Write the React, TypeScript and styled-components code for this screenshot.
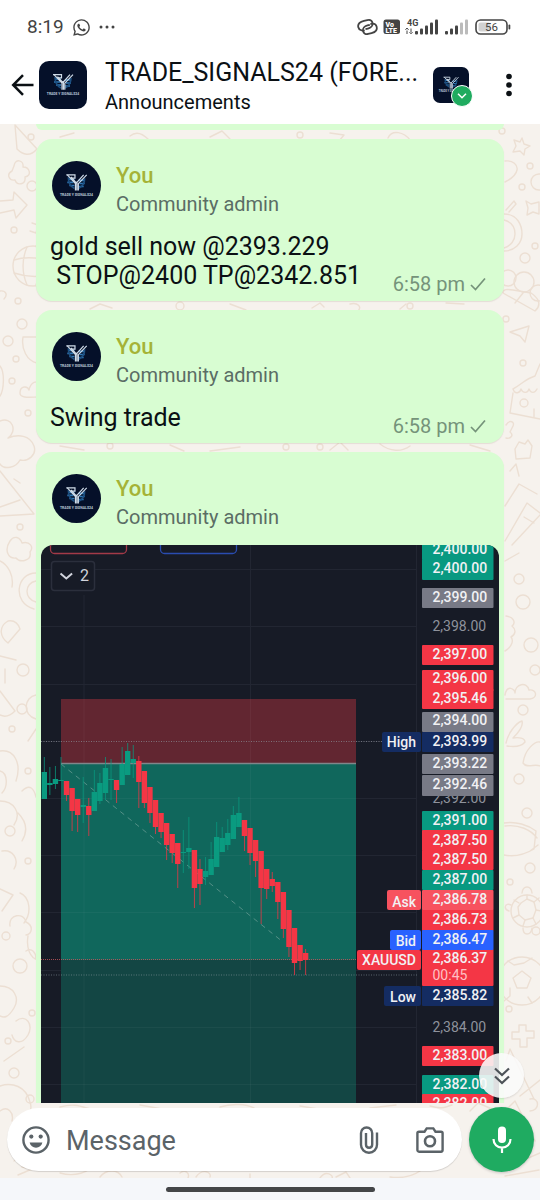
import React from "react";
import styled, { createGlobalStyle, css } from "styled-components";
import { FaWhatsapp } from "react-icons/fa";

const GlobalStyle = createGlobalStyle`
  * { box-sizing: border-box; }
  html, body { margin: 0; padding: 0; }
  body { font-family: Roboto, "Liberation Sans", sans-serif; color: #0b1014; background: #fff; }
  button { border: 0; padding: 0; background: none; font: inherit; color: inherit; cursor: pointer; }
  svg { display: block; }
`;

const Screen = styled.div`
  display: flex;
  flex-direction: column;
  height: 100vh;
  overflow: hidden;
`;

/* Status bar */

const StatusBar = styled.div`
  display: flex;
  align-items: center;
  justify-content: space-between;
  height: 54px;
  padding: 0 27px;
  color: #444;
  flex: none;
`;

const StatusGroup = styled.div`
  display: flex;
  align-items: center;
  gap: 8px;
`;

const Clock = styled.span`
  font-size: 19px;
  line-height: 24px;
`;

/* App bar */

const AppBar = styled.header`
  display: flex;
  align-items: center;
  height: 70px;
  padding: 0 24px 8px 11px;
  flex: none;
`;

const BackButton = styled.button`
  width: 28px;
  height: 40px;
  display: flex;
  align-items: center;
`;

const TitleBlock = styled.div`
  flex: 1;
  min-width: 0;
  padding: 3px 0 0 18px;
`;

const Title = styled.h1`
  margin: 0;
  font-size: 25px;
  line-height: 31px;
  font-weight: 400;
  white-space: nowrap;
`;

const Subtitle = styled.p`
  margin: 0;
  font-size: 20px;
  line-height: 28px;
`;

const CommunityButton = styled.button`
  position: relative;
  width: 40px;
  height: 36px;
  margin-right: 29px;
`;

const CommunityBadge = styled.span`
  position: absolute;
  right: 0;
  bottom: -4px;
  width: 22px;
  height: 22px;
  border: 1px solid #fff;
  border-radius: 50%;
  background: #1fab5f;
  display: flex;
  align-items: center;
  justify-content: center;
`;

const LogoFrame = styled.span<{ $size: number; $radius: string }>`
  display: block;
  flex: none;
  width: ${(p) => p.$size}px;
  height: ${(p) => p.$size}px;
  border-radius: ${(p) => p.$radius};
  overflow: hidden;
`;

/* Conversation */

const Conversation = styled.main`
  position: relative;
  flex: 1;
  min-height: 0;
  display: flex;
  flex-direction: column;
  background: #f6f2ed;
`;

const WallpaperSvg = styled.svg`
  position: absolute;
  inset: 0;
  width: 100%;
  height: 100%;
`;

const MessageList = styled.div`
  position: relative;
  flex: 1;
  min-height: 0;
  overflow: hidden;
  display: flex;
  flex-direction: column;
  gap: 9px;
  padding: 0 36px;
`;

const Bubble = styled.article<{ $photo?: boolean }>`
  flex: none;
  border-radius: 16px;
  background: #d8fdd2;
  box-shadow: 0 1px 1px rgba(120, 100, 80, 0.14);
  padding: ${(p) => (p.$photo ? "22px 5px 5px" : "22px 18px 8px 14px")};
`;

const PreviousBubble = styled.div`
  flex: none;
  height: 6px;
  border-radius: 0 0 16px 16px;
  background: #d8fdd2;
`;

const Sender = styled.header<{ $inset?: boolean }>`
  display: flex;
  align-items: flex-start;
  gap: 15px;
  padding-left: ${(p) => (p.$inset ? 11 : 2)}px;
`;

const SenderName = styled.div`
  font-size: 22px;
  line-height: 29px;
  font-weight: 500;
  color: #a5b337;
`;

const SenderRole = styled.div`
  font-size: 20px;
  line-height: 29px;
  color: #5b6d65;
`;

const MessageRow = styled.div`
  display: flex;
  align-items: flex-end;
  justify-content: space-between;
  margin-top: 13px;
`;

const MessageText = styled.p`
  margin: 0;
  font-size: 25px;
  line-height: 29px;
  white-space: pre-wrap;
  padding-bottom: 3px;
`;

const Meta = styled.div`
  display: flex;
  align-items: center;
  gap: 5px;
  font-size: 20px;
  line-height: 22px;
  color: #75937a;
  white-space: nowrap;
  margin-bottom: -2px;
`;

const Photo = styled.figure`
  margin: 13px 0 0;
  border-radius: 12px;
  overflow: hidden;
`;

const ChartSvg = styled.svg`
  width: 100%;
  height: auto;
  font-family: Roboto, "Liberation Sans", sans-serif;
`;

const ScrollButton = styled.button`
  position: absolute;
  right: 16px;
  bottom: 80px;
  width: 45px;
  height: 45px;
  border-radius: 50%;
  background: rgba(250, 250, 250, 0.88);
  box-shadow: 0 1px 2px rgba(0, 0, 0, 0.12);
  display: flex;
  align-items: center;
  justify-content: center;
`;

/* Composer */

const Composer = styled.form`
  position: relative;
  flex: none;
  display: flex;
  align-items: center;
  gap: 7px;
  padding: 4px 6px 6px 7px;
`;

const InputPill = styled.div`
  flex: 1;
  min-width: 0;
  display: flex;
  align-items: center;
  height: 63px;
  padding: 0 17px 0 14px;
  border-radius: 32px;
  background: #fff;
  box-shadow: 0 1px 1px rgba(0, 0, 0, 0.14);
`;

const iconBox = css`
  flex: none;
  display: flex;
  align-items: center;
  justify-content: center;
`;

const PillButton = styled.button`
  ${iconBox}
  width: 30px;
  height: 40px;
`;

const AttachButton = styled(PillButton)`
  margin-right: 31px;
`;

const MessageInput = styled.input`
  flex: 1;
  min-width: 0;
  border: 0;
  outline: 0;
  background: transparent;
  padding: 2px 0 0 15px;
  font: 400 27px/36px Roboto, "Liberation Sans", sans-serif;
  color: #0b1014;
  &::placeholder { color: #5b6368; opacity: 1; }
`;

const MicButton = styled.button`
  ${iconBox}
  width: 65px;
  height: 65px;
  border-radius: 50%;
  background: #1fab61;
  box-shadow: 0 1px 3px rgba(0, 0, 0, 0.2);
`;

const NavBar = styled.footer`
  flex: none;
  height: 22px;
  display: flex;
  justify-content: center;
  align-items: center;
  background: #f5f7fa;
`;

const NavHandle = styled.span`
  width: 209px;
  height: 5px;
  border-radius: 3px;
  background: #444648;
`;

function Logo({ size, radius }: { size: number; radius: string }) {
  return (
    <LogoFrame $size={size} $radius={radius}>
      <svg width={size} height={size} viewBox="0 0 48 48" aria-hidden="true">
        <rect width="48" height="48" fill="#051029" />
        <g fill="none" stroke="#2f78b5" strokeWidth="1.6">
          <path d="M16 18h6M15 21h6M17 24h5M26 19h6M27 22h5M26 25h5" />
          <path d="M16 16q0 8 6 11M32 17q0 7-6 10" stroke="#1d4f80" />
        </g>
        <g fill="none" stroke="#cfdbe8" strokeWidth="1.2">
          <path d="M14 13.600h8.500v3.200h-4" />
          <path d="M15 13.600l8 8.600v6.600M18.500 15.600l5.500 6M34 13.600l-8.200 8.600v6.600M31 13.600l-6.600 7.400M24.400 20v8.800" />
        </g>
        <text x="24" y="33.800" textAnchor="middle" fontSize="3.400" fontWeight="700" fill="#b9c6d6" fontFamily="Roboto, sans-serif">
          TRADE Y SIGNALS24
        </text>
      </svg>
    </LogoFrame>
  );
}

function StatusIcons() {
  return (
    <svg width="156" height="22" viewBox="0 0 156 22" aria-hidden="true">
      <g fill="none" stroke="#444" strokeWidth="1.8">
        <path d="M6.500 13.800C3.500 13.800 1 12 1 9.300 1 6 4 4.500 8 4.500h3.500c2.500 0 4.300 1.600 4.300 3.900 0 3-2.800 4.500-5.800 4.500H7.500" transform="rotate(-14 9 9)" />
        <path d="M14.500 8.500c3 0 5.500 1.500 5.500 4.300 0 3.200-2.800 4.800-6.500 4.800H10c-2.600 0-4.300-1.500-4.300-3.800 0-3 2.600-4.600 5.600-4.600h2.500" transform="rotate(-14 12 13)" />
      </g>
      <rect x="26.500" y="3.500" width="16.500" height="14.500" rx="2.500" fill="#444" />
      <g fill="#fff" fontFamily="Roboto, sans-serif" fontWeight="900" fontSize="7">
        <text x="28.500" y="10.600">Vo</text>
        <text x="28.500" y="17">LTE</text>
      </g>
      <text x="50" y="9.800" fontFamily="Roboto, sans-serif" fontWeight="700" fontSize="9" fill="#444">4G</text>
      <path d="M50 14.500V18M48.500 13.800l1.500-1.800 1.500 1.800M54 12.500V16M52.500 16l1.500 1.800 1.500-1.800" fill="none" stroke="#444" />
      <g fill="#444">
        <rect x="58" y="15" width="3" height="3.500" rx="1" />
        <rect x="63" y="12.500" width="3" height="6" rx="1" />
        <rect x="68" y="9.500" width="3" height="9" rx="1" />
        <rect x="73" y="6.500" width="3" height="12" rx="1" />
        <rect x="78" y="3.500" width="3" height="15" rx="1" />
        <rect x="88" y="15" width="3" height="3.500" rx="1" />
        <rect x="93" y="12.500" width="3" height="6" rx="1" />
        <rect x="98" y="9.500" width="3" height="9" rx="1" />
      </g>
      <g fill="#bbb">
        <rect x="103" y="6.500" width="3" height="12" rx="1" />
        <rect x="108" y="3.500" width="3" height="15" rx="1" />
      </g>
      <rect x="119" y="4" width="31" height="14" rx="4.500" fill="none" stroke="#444" strokeWidth="1.600" />
      <rect x="121.500" y="6.500" width="12" height="9" rx="2" fill="#d2d2d2" />
      <rect x="151.500" y="8.500" width="1.800" height="5" rx="0.900" fill="#444" />
      <text x="134.500" y="15" textAnchor="middle" fontFamily="Roboto, sans-serif" fontSize="11.500" fill="#444">56</text>
    </svg>
  );
}

const SmallCircles: [number, number, number][] = [
  [530, 165, 3], [539, 181, 8], [522, 186, 3], [535, 245, 3], [525, 257, 5], [508, 277, 8], [524, 281, 10],
  [538, 292, 8], [506, 318, 3], [523, 362, 3], [519, 578, 5], [523, 601, 7], [531, 644, 7], [535, 669, 5],
  [523, 709, 5], [519, 778, 5], [527, 812, 5], [530, 867, 5], [510, 881, 3], [509, 1008, 3], [502, 130, 3],
  [31, 136, 3], [32, 185, 5], [14, 229, 3], [18, 300, 3], [22, 323, 5], [8, 340, 5], [16, 358, 3], [12, 380, 3],
  [28, 412, 3], [20, 526, 3], [23, 669, 6], [22, 708, 5], [28, 770, 3], [12, 728, 3], [6, 935, 4], [20, 965, 7],
  [14, 1072, 5], [8, 1040, 3], [32, 1012, 3], [10, 830, 5], [28, 860, 3], [30, 1098, 4], [536, 930, 4],
  [300, 134, 3], [410, 305, 3], [320, 446, 3], [110, 445, 3], [286, 446, 3], [180, 305, 4],
];

function Wallpaper() {
  return (
    <WallpaperSvg viewBox="0 123 540 1055" preserveAspectRatio="xMidYMin slice" aria-hidden="true">
      <g fill="none" stroke="#ecdfd3" strokeWidth="1.400" strokeLinejoin="round" strokeLinecap="round">
        {SmallCircles.map(([x, y, r]) => (
          <circle key={`${x}-${y}`} cx={x} cy={y} r={r} />
        ))}
        {/* right edge */}
        <path d="M522 137l2 6 6 2-5 3-1 6-4-4-7 1 3-6-2-6 6 2zM526 200l5 3 8-2v12l-6-2-6 3 1-7z" />
        <path d="M505 160c8-1 13 4 12 9s-6 9-12 12M504 213c14 0 18 12 18 20 0 10-8 17-18 17M504 219c8 2 11 8 11 14s-4 12-11 14M506 209l8-9 2 3-7 8" />
        <path d="M503 292l32 18c8-7 2-14-4-18l-18-3c-6-1-10-1-10 3zM515 302l8-10" />
        <path d="M510 331l19-6-4 16-5-6zM513 388c8-4 12-10 22-13l5-12M513 388c2 6 7 4 8 0 2 5 7 4 8 0 2 5 6 4 8 0M513 392l-3 20 30 6M534 408v8" />
        <circle cx="524" cy="402" r="4" />
        <path d="M506 424c4-6 9-3 7 1l-3 6c4 3 1 7-4 6M515 448l4-7 6 2 3-4 4 6-2 12-14 1zM510 470l6-7 3 12M505 505l14-22 18 10M505 540l22-38 13 10M512 544l28-30M524 516l10 6M505 560l14-8" />
        <path d="M506 615c8 1 10 7 6 10 5 4 3 9-1 11 4 5-2 12-6 14M505 694c2-11 10-6 10-2 0-9 12-12 14-3 8-1 9 8 1 9h-24M506 742c2-10 10-20 16-22 2 6-5 13-9 17 6-1 12 0 12 4-4 5-12 5-18 4M523 762c2-14 12-22 17-21M523 762c4 6 12 0 17 3M505 825c14-2 26 4 32 12" />
        <path d="M504 822c12-2 24 2 32 8l-2 18c-10 6-20 8-30 6M530 850l8-6" />
        <circle cx="527" cy="910" r="16" />
        <path d="M521 902l6-4 7 3 2 8-3 8-8 2-6-5-1-8z" />
        <path d="M519 902l-5-3M527 898v-4M534 901l5-4M536 909l6 1M533 917l3 6M525 919l-2 6M519 914l-6 3M522 892c1-8 9-8 10 0M523 927c0 8 8 8 9 0M511 904c-6-3-8 4-2 6" />
        <circle cx="522" cy="980" r="24" />
        <path d="M522 970l9 7-4 10h-10l-4-10zM508 960l6 4 10-2 8-5M504 1000l6-5v-8M532 1002l-4-6M519 1024h7v6h8v7h-7v9h-7v-8h-8v-7h7zM506 1060l4-12 24 50M520 1095l20-16M530 1110c10 0 10-14 0-12" />
        <path d="M505 1110l10-10 20 40M512 1164l28-12M505 1175l34-6M470 1110l8-8 14 6" />
        {/* left edge */}
        <path d="M15 124l22 24c-7 8-14 6-20 0zM14 165c1-8 10-6 9 1 7 0 9 9 2 10 1 8-8 9-10 3-6 1-9-6-3-9zM0 200l13-1 1-8 13 13-11 13-2-8-14 3M32 222l6 2-2 8-6-2" />
        <circle cx="33" cy="265" r="20" />
        <path d="M14 259c12-4 24-3 40 2M14 272c12 4 24 5 38 1M27 246c-5 12-5 26 0 38M36 245c5 12 5 26 0 39M0 290c6-1 8 4 4 8M23 336h16M23 336c-2 12 4 24 14 26" />
        <path d="M20 392c0-8 8-7 9-3 2-9 8-9 10-7M20 392c0 6 12 4 18 4M0 365c5 6 4 24 0 30M0 420c12-5 18 10 8 17 10-4 22-3 26 8 3 9-6 16-14 14-4 8-16 10-20 4M0 470l34 43-34 2M14 478l6 4M0 506l20-7" />
        <path d="M10 540c4-6 10-4 12 2 8-2 12 4 8 9 2 9-10 11-14 6-8 1-12-8-6-17zM36 572c-20 0-24 30-2 36M36 580c-12 2-12 18 0 21M0 560c8 4 14 14 12 26" />
        <path d="M8 620c-10 6-8 16 0 22l12-14c-2-6-6-9-12-8zM0 655l16 4M0 690l15 20c-6 6-11 6-15 4M5 668v14M36 694c-12 2-14 20 0 24M28 740l8-12M0 750c14-2 22 12 16 30M0 770c8 2 8 16 2 22M22 790c8-8 12-2 14 6" />
        <path d="M0 800c14 0 22 12 14 24M18 812c8 8 10 18 4 28M2 850c10-2 18 8 12 18M0 888l13 6-11 16M20 892c10 4 12 20 4 30M10 925c-2-12 14-14 16-4 8 4 6 12 0 13M28 935c-2 12 2 22 10 24M26 950c6-4 10 2 10 8" />
        <path d="M0 985c14 0 20 12 14 22s-10 10-14 8M16 1020c10-8 18 4 12 14s-14 8-16 0M4 1060l20-14M0 1085c12-4 26 0 30 16 4 12-6 20-14 22M0 1110c8-6 14 2 12 10M14 1160l10-6-2 12 10 2-14 6M60 1172c14 4 30 0 34-10" />
        {/* gaps between bubbles */}
        <path d="M130 135c6-5 12-3 18 3M210 136l12-6 8 8M330 132l14 2-5 6M388 137c4-9 16-6 22 2M60 136l14-4" />
        <path d="M90 308l10-5 12 4M312 307l8-5 4 4M350 303c8-2 12 3 8 7M446 302l18 1M230 303l16 6M400 308l6-5" />
        <path d="M60 445l24 4M170 444l14 6M210 450l30-4M330 449l10-8 8 8M380 443c10 8 22 8 30 2M470 444l20 6" />
        <path d="M60 1106c14-4 20-1 30 2M140 1104l22 4M220 1106c12-4 26-3 34 1M300 1105l18 3M370 1107l26-3M430 1105c10 3 14 2 22-1" />
        <path d="M100 1176c6-8 18-8 22 0M180 1172c5-4 10 0 8 5M196 1176c6-9 16-5 14 0M250 1173v5M320 1177c6-9 14-2 12 0M336 1176l10-5 4 6M390 1176c14 2 24-2 30-6" />
      </g>
    </WallpaperSvg>
  );
}

type Candle = [up: 0 | 1, high: number, top: number, bottom: number, low: number];

const CANDLES: Candle[] = [
  [1, 212, 227, 254, 254], [1, 222, 238, 240, 250], [1, 221, 234, 239, 244], [1, 212, 235, 236, 236],
  [0, 236, 236, 250, 256], [0, 243, 243, 266, 286], [0, 254, 254, 270, 287], [1, 232, 260, 262, 278],
  [0, 253, 261, 270, 291], [1, 225, 247, 266, 266], [1, 228, 238, 256, 259], [1, 212, 223, 248, 255],
  [1, 214, 234, 235, 255], [0, 235, 235, 245, 258], [1, 202, 219, 240, 240], [1, 198, 206, 230, 230],
  [1, 200, 214, 218, 233], [0, 211, 216, 237, 263], [0, 226, 226, 258, 263], [0, 242, 242, 268, 278],
  [0, 255, 255, 282, 289], [0, 268, 268, 287, 293], [0, 278, 278, 300, 315], [0, 289, 289, 308, 318],
  [0, 298, 298, 319, 343], [1, 285, 307, 308, 328], [1, 272, 303, 307, 324], [0, 305, 305, 343, 363],
  [0, 314, 324, 339, 360], [1, 312, 326, 332, 340], [1, 297, 314, 330, 330], [1, 277, 292, 322, 322],
  [1, 282, 293, 307, 307], [1, 274, 288, 300, 305], [1, 261, 270, 294, 294], [1, 252, 268, 282, 282],
  [0, 275, 275, 291, 306], [0, 283, 283, 308, 320], [0, 295, 295, 316, 332], [0, 306, 306, 343, 379],
  [0, 324, 324, 344, 354], [0, 327, 334, 341, 347], [0, 337, 337, 357, 374], [0, 347, 347, 384, 393],
  [0, 365, 365, 402, 412], [0, 383, 383, 418, 430], [0, 400, 400, 416, 425], [0, 404, 408, 415, 430],
];
const CANDLE_START = 3.3;
const CANDLE_STEP = 5.56;

const RED = "#f43645";
const GREEN = "#089981";
const GRAY = "#787a86";
const NAVY = "#142c62";
const BLUE = "#2962ff";
const PINK = "#f7525f";

interface PriceLabel {
  text: string;
  y: number;
  top: number;
  bottom: number;
  fill?: string;
}

const PRICES: PriceLabel[] = [
  { text: "2,392.00", y: 253, top: 0, bottom: 0 },
  { text: "2,400.00", y: 4, top: -6, bottom: 15, fill: GREEN },
  { text: "2,400.00", y: 23, top: 14, bottom: 35, fill: GREEN },
  { text: "2,399.00", y: 52, top: 43, bottom: 63, fill: GRAY },
  { text: "2,398.00", y: 81, top: 0, bottom: 0 },
  { text: "2,397.00", y: 109, top: 100, bottom: 120, fill: RED },
  { text: "2,396.00", y: 133, top: 125, bottom: 146, fill: RED },
  { text: "2,395.46", y: 153, top: 144, bottom: 164, fill: RED },
  { text: "2,394.00", y: 175, top: 167, bottom: 187, fill: GRAY },
  { text: "2,393.99", y: 196, top: 187, bottom: 207, fill: NAVY },
  { text: "2,393.22", y: 218, top: 209, bottom: 229, fill: GRAY },
  { text: "2,392.46", y: 239, top: 230, bottom: 251, fill: GRAY },
  { text: "2,391.00", y: 275, top: 266, bottom: 286, fill: GREEN },
  { text: "2,387.50", y: 295, top: 285, bottom: 306, fill: RED },
  { text: "2,387.50", y: 314, top: 305, bottom: 325, fill: RED },
  { text: "2,387.00", y: 334, top: 325, bottom: 345, fill: GREEN },
  { text: "2,386.73", y: 374, top: 364, bottom: 386, fill: RED },
  { text: "2,386.78", y: 354, top: 345, bottom: 365, fill: PINK },
  { text: "2,386.37", y: 413, top: 404, bottom: 441, fill: RED },
  { text: "2,386.47", y: 394, top: 385, bottom: 405, fill: BLUE },
  { text: "2,385.82", y: 450, top: 441, bottom: 461, fill: NAVY },
  { text: "2,384.00", y: 482, top: 0, bottom: 0 },
  { text: "2,383.00", y: 510, top: 501, bottom: 521, fill: RED },
  { text: "2,382.00", y: 539, top: 530, bottom: 550, fill: GREEN },
  { text: "2,382.00", y: 558, top: 549, bottom: 570, fill: RED },
];

const TAGS = [
  { text: "High", x: 341, y: 197, top: 187, fill: NAVY },
  { text: "Ask", x: 346, y: 357, top: 345, fill: PINK },
  { text: "Bid", x: 349, y: 396, top: 385, fill: BLUE },
  { text: "XAUUSD", x: 316, y: 415, top: 405, fill: RED },
  { text: "Low", x: 343, y: 452, top: 441, fill: NAVY },
];

function Chart() {
  return (
    <ChartSvg viewBox="0 0 458 600" role="img" aria-label="XAUUSD candlestick chart">
      <rect width="458" height="600" fill="#171b26" />
      <path
        d="M0 24.500H376M0 81.500H376M0 139.500H376M0 196.500H376M0 253.500H376M0 310.500H376M0 367.500H376M0 425.500H376M0 482.500H376M0 539.500H376M43 50V600M209.500 0V600M375.500 0V600"
        stroke="#222632"
      />
      <rect x="9.500" y="-12" width="76" height="20.500" rx="4" fill="none" stroke="#a33a48" strokeWidth="1.300" />
      <rect x="119.500" y="-12" width="76" height="20.500" rx="4" fill="none" stroke="#2a4cb0" strokeWidth="1.300" />
      <rect x="10.500" y="16.500" width="43" height="29" rx="3" fill="#171b26" stroke="#2b2f3c" strokeWidth="1.500" />
      <path d="M19.500 28.500l5.800 5 5.800-5" fill="none" stroke="#d1d4dc" strokeWidth="2" />
      <text x="39" y="36" fontSize="16" fill="#d1d4dc">2</text>

      <rect x="20" y="154" width="295" height="65" fill="#622631" />
      <rect x="20" y="219" width="295" height="196" fill="#10675c" />
      <rect x="20" y="415" width="295" height="185" fill="#134644" />
      <path d="M20 253.500H315M20 310.500H315M20 367.500H315M43 154V600M209.500 154V600M20 482.500H315M20 539.500H315" stroke="#fff" strokeOpacity="0.040" />
      <path d="M20 218.500H315" stroke="#80868b" strokeWidth="1.300" />
      <path d="M0 196.500H341" stroke="#8b8f99" strokeOpacity="0.700" strokeDasharray="1 1.500" />
      <path d="M0 414.500H316" stroke="#c0555a" strokeOpacity="0.850" strokeDasharray="1 1" />
      <path d="M0 430H376" stroke="#8b9aa0" strokeOpacity="0.600" strokeDasharray="1 1.500" />
      <path d="M20 219L242 397" fill="none" stroke="#71a199" strokeOpacity="0.700" strokeDasharray="5 4.500" />

      {CANDLES.map(([up, high, top, bottom, low], i) => {
        const x = CANDLE_START + i * CANDLE_STEP;
        const color = up ? "#0a9b80" : RED;
        return (
          <g key={i} fill={color}>
            <rect x={x - 0.5} y={high} width="1" height={low - high} opacity="0.750" />
            <rect x={x - 2.7} y={top} width="5.400" height={bottom - top} />
          </g>
        );
      })}

      {PRICES.map((p, i) => (
        <g key={i}>
          {p.fill && <rect x="381" y={p.top} width="71.500" height={p.bottom - p.top} rx="1" fill={p.fill} />}
          <text x="391.500" y={p.y + 5} fontSize="14" fontWeight={p.fill ? 500 : 400} fill={p.fill ? "#f1f1f4" : "#8e929c"}>
            {p.text}
          </text>
        </g>
      ))}
      <text x="391.500" y="435" fontSize="14" fill="#ffc0c4">00:45</text>
      {TAGS.map((t) => (
        <g key={t.text}>
          <rect x={t.x} y={t.top} width={380 - t.x} height="20" rx="2" fill={t.fill} />
          <text x="375" y={t.y + 5} textAnchor="end" fontSize="14" fontWeight="500" fill="#f1f1f4">{t.text}</text>
        </g>
      ))}
    </ChartSvg>
  );
}

function SenderHeader({ inset }: { inset?: boolean }) {
  return (
    <Sender $inset={inset}>
      <Logo size={49} radius="50%" />
      <div>
        <SenderName>You</SenderName>
        <SenderRole>Community admin</SenderRole>
      </div>
    </Sender>
  );
}

function TextMessage({ text, time }: { text: string; time: string }) {
  return (
    <Bubble>
      <SenderHeader />
      <MessageRow>
        <MessageText>{text}</MessageText>
        <Meta>
          <time>{time}</time>
          <svg width="16" height="16" viewBox="0 0 16 16" aria-label="Sent">
            <path d="M1 9l4.500 4.500L15 2.500" fill="none" stroke="#75937a" strokeWidth="1.700" />
          </svg>
        </Meta>
      </MessageRow>
    </Bubble>
  );
}

export default function App() {
  return (
    <Screen>
      <GlobalStyle />
      <StatusBar>
        <StatusGroup>
          <Clock>8:19</Clock>
          <FaWhatsapp size={19} aria-hidden="true" />
          <svg width="16" height="4" viewBox="0 0 16 4" fill="#444" aria-hidden="true">
            <circle cx="2" cy="2" r="1.500" />
            <circle cx="8" cy="2" r="1.500" />
            <circle cx="14" cy="2" r="1.500" />
          </svg>
        </StatusGroup>
        <StatusIcons />
      </StatusBar>
      <AppBar>
        <BackButton aria-label="Back">
          <svg width="23" height="22" viewBox="0 0 23 22" aria-hidden="true">
            <path d="M22.500 11H2.500M12 1.200L2.200 11l9.800 9.800" fill="none" stroke="#0b1014" strokeWidth="2.500" />
          </svg>
        </BackButton>
        <Logo size={48} radius="10px" />
        <TitleBlock>
          <Title>TRADE_SIGNALS24 (FORE...</Title>
          <Subtitle>Announcements</Subtitle>
        </TitleBlock>
        <CommunityButton aria-label="Open community">
          <Logo size={36} radius="7px" />
          <CommunityBadge>
            <svg width="10" height="6" viewBox="0 0 10 6" aria-hidden="true">
              <path d="M1 0.800L5 4.800 9 0.800" fill="none" stroke="#fff" strokeWidth="1.500" />
            </svg>
          </CommunityBadge>
        </CommunityButton>
        <button aria-label="More options">
          <svg width="14" height="24" viewBox="0 0 14 24" fill="#0b1014" aria-hidden="true">
            <circle cx="7" cy="3.500" r="2.800" />
            <circle cx="7" cy="12" r="2.800" />
            <circle cx="7" cy="20.500" r="2.800" />
          </svg>
        </button>
      </AppBar>

      <Conversation>
        <Wallpaper />
        <MessageList>
          <PreviousBubble />
          <TextMessage text={"gold sell now @2393.229\n STOP@2400 TP@2342.851"} time="6:58 pm" />
          <TextMessage text="Swing trade" time="6:58 pm" />
          <Bubble $photo>
            <SenderHeader inset />
            <Photo>
              <Chart />
            </Photo>
          </Bubble>
        </MessageList>
        <ScrollButton aria-label="Scroll to latest">
          <svg width="18" height="18" viewBox="0 0 18 18" aria-hidden="true">
            <path d="M2 1.500l7 6.500 7-6.500M2 9.500l7 6.500 7-6.500" fill="none" stroke="#4d5358" strokeWidth="2.200" />
          </svg>
        </ScrollButton>
        <Composer onSubmit={(e) => e.preventDefault()}>
          <InputPill>
            <PillButton type="button" aria-label="Emoji">
              <svg width="28" height="28" viewBox="0 0 28 28" aria-hidden="true">
                <circle cx="14" cy="14" r="12.600" fill="none" stroke="#5b6368" strokeWidth="2.400" />
                <circle cx="9.300" cy="10.600" r="2.100" fill="#5b6368" />
                <circle cx="18.700" cy="10.600" r="2.100" fill="#5b6368" />
                <path d="M7.600 16.500h12.800c-.8 3.200-3.200 5.200-6.400 5.200s-5.600-2-6.400-5.200z" fill="#5b6368" />
              </svg>
            </PillButton>
            <MessageInput type="text" placeholder="Message" aria-label="Message" />
            <AttachButton type="button" aria-label="Attach">
              <svg width="20" height="28" viewBox="0 0 20 28" aria-hidden="true">
                <path
                  d="M18 6.500v12.300c0 4.600-3.500 7.900-8 7.900s-8-3.300-8-7.900V7.200c0-3.300 2.400-5.700 5.600-5.700s5.600 2.400 5.600 5.700v11.400c0 1.900-1.300 3.200-3.100 3.200S7 20.500 7 18.600V7"
                  fill="none"
                  stroke="#5b6368"
                  strokeWidth="2.400"
                />
              </svg>
            </AttachButton>
            <PillButton type="button" aria-label="Camera">
              <svg width="28" height="26" viewBox="0 0 28 26" aria-hidden="true">
                <path d="M3 4.700h5.500l2.200-3.300h6.600l2.200 3.300H25c.9 0 1.600.7 1.600 1.600v16.800c0 .9-.7 1.600-1.600 1.600H3c-.9 0-1.600-.7-1.600-1.600V6.300c0-.9.7-1.600 1.600-1.600z" fill="none" stroke="#5b6368" strokeWidth="2.400" />
                <circle cx="14" cy="14.300" r="5" fill="none" stroke="#5b6368" strokeWidth="2.600" />
              </svg>
            </PillButton>
          </InputPill>
          <MicButton type="button" aria-label="Record voice message">
            <svg width="20" height="28" viewBox="0 0 20 28" aria-hidden="true">
              <rect x="6" y="0.500" width="8" height="16.500" rx="4" fill="#fff" />
              <path d="M1.500 13c0 5 3.700 8.700 8.500 8.700s8.500-3.700 8.500-8.700M10 21.500V27" fill="none" stroke="#fff" strokeWidth="2.200" />
            </svg>
          </MicButton>
        </Composer>
      </Conversation>
      <NavBar>
        <NavHandle />
      </NavBar>
    </Screen>
  );
}
